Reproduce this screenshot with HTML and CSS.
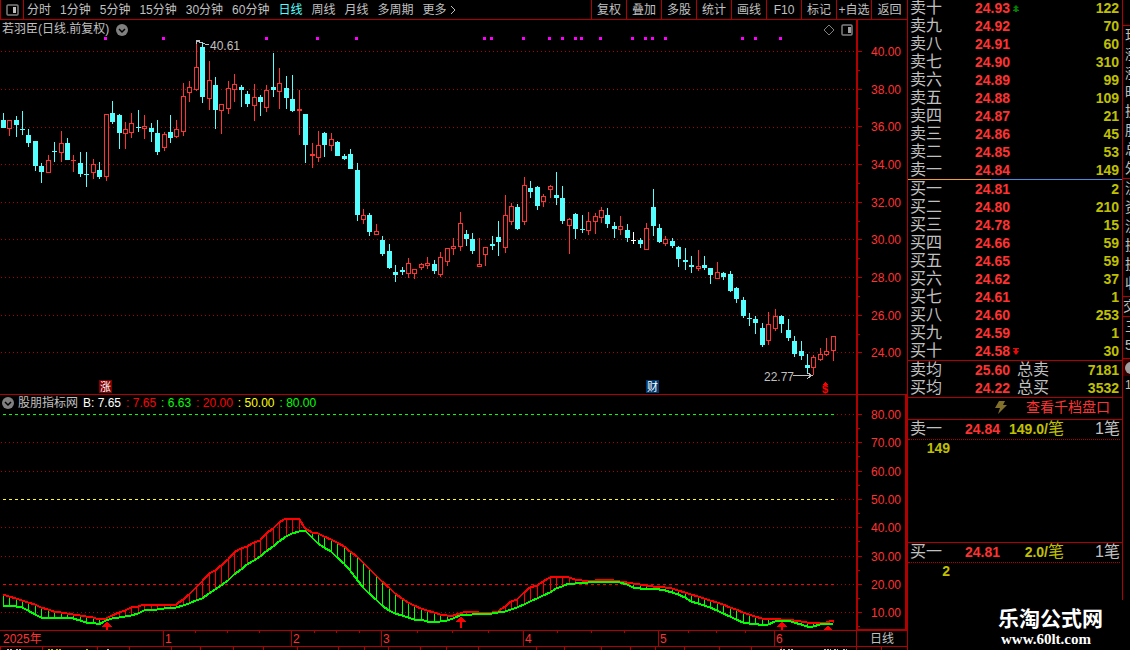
FILE: index.html
```html
<!DOCTYPE html>
<html lang="zh-CN">

<head>
    <meta charset="UTF-8">
    <meta name="viewport" content="width=device-width, initial-scale=1.0">
    <title>若羽臣 日线</title>
    <link rel="stylesheet" href="styles.css">
</head>

<body>
    <div class="terminal">
        <main class="charts">
            <div class="toolbar">
                <button class="layout-btn" aria-label="布局">
                    <svg width="13" height="12" viewBox="0 0 13 12">
                        <rect x="1" y="1" width="11" height="10" rx="1" fill="none" stroke="#808080" stroke-width="1.5" />
                        <rect x="7" y="3" width="3" height="6" fill="#c0c0c0" />
                    </svg>
                </button>
                <nav class="periods">
                    <button>分时</button>
                    <button>1分钟</button>
                    <button>5分钟</button>
                    <button>15分钟</button>
                    <button>30分钟</button>
                    <button>60分钟</button>
                    <button class="active">日线</button>
                    <button>周线</button>
                    <button>月线</button>
                    <button>多周期</button>
                    <button>更多
                        <svg width="6" height="10" viewBox="0 0 6 10"><path d="M1 1l4 4-4 4" fill="none" stroke="#c0c0c0" /></svg>
                    </button>
                </nav>
                <div class="tools">
                    <button>复权</button>
                    <button>叠加</button>
                    <button>多股</button>
                    <button>统计</button>
                    <button>画线</button>
                    <button>F10</button>
                    <button>标记</button>
                    <button>+自选</button>
                    <button>返回</button>
                </div>
            </div>

            <section class="pane price-pane">
                <div class="plot">
                    <div class="pane-title">
                        <span>若羽臣(日线.前复权)</span>
                        <svg class="chevron" width="12" height="12" viewBox="0 0 12 12">
                            <circle cx="6" cy="6" r="6" fill="#808080" />
                            <path d="M3 5l3 3 3-3" fill="none" stroke="#000" stroke-width="1.5" />
                        </svg>
                        <svg class="pane-icons" width="30" height="12" viewBox="0 0 30 12">
                            <path d="M6 1l5 5-5 5-5-5z" fill="none" stroke="#808080" />
                            <rect x="19" y="1" width="10" height="10" rx="1" fill="none" stroke="#808080" stroke-width="1.5" />
                            <rect x="25" y="3" width="3" height="6" fill="#a0a0a0" />
                        </svg>
                    </div>
                    <svg id="price" class="price-svg"></svg>
                </div>
                <svg id="price-axis" class="axis"></svg>
            </section>

            <section class="pane indicator-pane">
                <div class="plot">
                    <div class="pane-title indicator-title">
                        <svg class="chevron" width="12" height="12" viewBox="0 0 12 12">
                            <circle cx="6" cy="6" r="6" fill="#808080" />
                            <path d="M3 5l3 3 3-3" fill="none" stroke="#000" stroke-width="1.5" />
                        </svg>
                        <span>股朋指标网</span>
                        <span class="white">B: 7.65</span>
                        <span class="pure-red">: 7.65</span>
                        <span class="green">: 6.63</span>
                        <span class="pure-red">: 20.00</span>
                        <span class="yellow">: 50.00</span>
                        <span class="green">: 80.00</span>
                    </div>
                    <svg id="indicator" class="indicator-svg"></svg>
                </div>
                <svg id="indicator-axis" class="axis"></svg>
            </section>

            <div class="timeline">
                <svg id="months"></svg>
                <button class="period-label">日线</button>
            </div>
            <svg id="strip" class="strip"></svg>
        </main>

        <aside class="book">
            <table class="asks">
                <tr><th>卖十</th><td>24.93</td><td><svg class="mark" width="6" height="7" viewBox="0 0 6 7"><path d="M3 0l3 3H4v1l2 1v1H4v1H2V6H0V5l2-1V3H0z" fill="#008000" /></svg></td><td>122</td></tr>
                <tr><th>卖九</th><td>24.92</td><td></td><td>70</td></tr>
                <tr><th>卖八</th><td>24.91</td><td></td><td>60</td></tr>
                <tr><th>卖七</th><td>24.90</td><td></td><td>310</td></tr>
                <tr><th>卖六</th><td>24.89</td><td></td><td>99</td></tr>
                <tr><th>卖五</th><td>24.88</td><td></td><td>109</td></tr>
                <tr><th>卖四</th><td>24.87</td><td></td><td>21</td></tr>
                <tr><th>卖三</th><td>24.86</td><td></td><td>45</td></tr>
                <tr><th>卖二</th><td>24.85</td><td></td><td>53</td></tr>
                <tr><th>卖一</th><td>24.84</td><td></td><td>149</td></tr>
            </table>
            <div class="ratio"></div>
            <table class="bids">
                <tr><th>买一</th><td>24.81</td><td></td><td>2</td></tr>
                <tr><th>买二</th><td>24.80</td><td></td><td>210</td></tr>
                <tr><th>买三</th><td>24.78</td><td></td><td>15</td></tr>
                <tr><th>买四</th><td>24.66</td><td></td><td>59</td></tr>
                <tr><th>买五</th><td>24.65</td><td></td><td>59</td></tr>
                <tr><th>买六</th><td>24.62</td><td></td><td>37</td></tr>
                <tr><th>买七</th><td>24.61</td><td></td><td>1</td></tr>
                <tr><th>买八</th><td>24.60</td><td></td><td>253</td></tr>
                <tr><th>买九</th><td>24.59</td><td></td><td>1</td></tr>
                <tr><th>买十</th><td>24.58</td><td><svg class="mark" width="6" height="7" viewBox="0 0 6 7"><path d="M0 0h6v1H4v2h2L3 7 0 3h2V1H0z" fill="#f00" /></svg></td><td>30</td></tr>
            </table>
            <table class="averages">
                <tr><th>卖均</th><td>25.60</td><th>总卖</th><td>7181</td></tr>
                <tr><th>买均</th><td>24.22</td><th>总买</th><td>3532</td></tr>
            </table>
            <div class="depth-link">
                <svg width="12" height="13" viewBox="0 0 12 13"><path d="M4 0h6L8 4h4L3 13l2-6H0z" fill="#80702a" /></svg>
                <a href="#">查看千档盘口</a>
            </div>
            <section class="queue">
                <div class="queue-head">
                    <span class="side">卖一</span><b class="red">24.84</b><span class="per"><b>149.0/</b>笔</span><span class="count">1笔</span>
                </div>
                <b class="lot">149</b>
            </section>
            <section class="queue buy-queue">
                <div class="queue-head">
                    <span class="side">买一</span><b class="red">24.81</b><span class="per"><b>2.0/</b>笔</span><span class="count">1笔</span>
                </div>
                <b class="lot">2</b>
            </section>
            <div class="watermark">
                <strong>乐淘公式网</strong>
                <span>www.60lt.com</span>
            </div>
        </aside>

        <aside class="quote">
            <div class="quote-top"></div>
            <ul class="quote-list">
                <li>现</li>
                <li>涨</li>
                <li>涨</li>
                <li>昨</li>
                <li>换</li>
                <li>股</li>
                <li>总</li>
                <li>外</li>
            </ul>
            <ul class="quote-list flows">
                <li>流</li>
                <li>资</li>
                <li>流</li>
                <li>换</li>
                <li>换</li>
                <li>收</li>
            </ul>
            <div class="quote-cell">交</div>
            <ul class="quote-list short">
                <li>三</li>
                <li>5</li>
            </ul>
            <div class="quote-tab"><i></i></div>
            <div class="quote-one">1</div>
        </aside>
    </div>
    <script src="chart.js"></script>
</body>

</html>
```
FILE: styles.css
```css
* {
    box-sizing: border-box;
}

body {
    margin: 0;
    background: #000;
    color: #c0c0c0;
    font-family: "Liberation Sans", "Noto Sans CJK SC", sans-serif;
    font-size: 12px;
    overflow: hidden;
}

button {
    padding: 0;
    border: 0;
    background: none;
    color: inherit;
    font: inherit;
    white-space: nowrap;
    cursor: pointer;
}

svg {
    display: block;
}

.terminal {
    display: grid;
    grid-template-columns: minmax(0, 1fr) 216px 7px;
    grid-template-rows: 100vh;
    overflow: hidden;
}

/* toolbar */
.toolbar {
    display: flex;
    height: 20px;
    border-bottom: 1px solid #b00000;
    line-height: 18px;
}

.layout-btn {
    display: flex;
    align-items: center;
    justify-content: center;
    width: 24px;
    border-left: 1px solid #b00000;
    border-right: 1px solid #b00000;
}

.periods {
    display: flex;
    flex: 1;
    gap: 9px;
    padding-left: 3px;
    min-width: 0;
    overflow: hidden;
}

.periods svg {
    display: inline-block;
    vertical-align: -1px;
}

.periods .active {
    color: #54ffff;
}

.tools {
    display: flex;
}

.tools button {
    width: 35px;
    border-left: 1px solid #b00000;
}

.tools button:last-child {
    width: 36px;
}

/* chart panes */
.pane {
    display: grid;
    grid-template-columns: minmax(0, 1fr) 51px;
    border-bottom: 1px solid #b00000;
}

.plot svg {
    shape-rendering: crispEdges;
}

.pane-title {
    display: flex;
    align-items: center;
    gap: 7px;
    height: 17px;
    padding: 2px 3px 0 2px;
    line-height: 15px;
    white-space: nowrap;
}

.pane-title svg {
    shape-rendering: auto;
}

.pane-icons {
    margin-left: auto;
}

.indicator-title {
    gap: 5px;
    height: 16px;
    padding-top: 0;
}

.indicator-title .chevron {
    margin-right: -1px;
}

.price-svg {
    width: 100%;
    height: 357px;
}

.indicator-svg {
    width: 100%;
    height: 219px;
}

.axis {
    width: 51px;
    height: 100%;
    border-left: 2px solid #b00000;
    shape-rendering: crispEdges;
}

.indicator-pane .axis {
    border-right: 2px solid #b00000;
    border-bottom: 1px solid #b00000;
}

.timeline {
    display: grid;
    grid-template-columns: minmax(0, 1fr) 51px;
    height: 16px;
    border-bottom: 1px solid #b00000;
}

#months,
.strip {
    width: 100%;
    shape-rendering: crispEdges;
}

#months {
    height: 15px;
}

.strip {
    height: 3px;
}

.period-label {
    border-left: 1px solid #b00000;
    line-height: 14px;
}

.white {
    color: #fff;
}

.red {
    color: #ff3232;
}

.pure-red {
    color: #f00;
}

.green {
    color: #0f0;
}

.yellow {
    color: #ff0;
}

/* order book */
.book {
    position: relative;
    display: flex;
    flex-direction: column;
    border-left: 1px solid #b00000;
    border-right: 1px solid #b00000;
    font-size: 16px;
}

.book table {
    width: 100%;
    table-layout: fixed;
    border-collapse: collapse;
}

.book tr {
    height: 18px;
}

.book th,
.book td {
    padding: 0;
    line-height: 18px;
    white-space: nowrap;
}

.book th {
    padding-left: 2px;
    font-weight: normal;
    text-align: left;
}

.book td {
    font-size: 14px;
    font-weight: bold;
    color: #ff3232;
}

.book th:first-child {
    width: 67px;
}

.book td:nth-child(2) {
    width: 37px;
}

.book th:nth-child(3) {
    padding-left: 5px;
}

.book td:last-child {
    width: 70px;
    padding-right: 3px;
    color: #c0c000;
    text-align: right;
}

.mark {
    margin-left: 1px;
}

.asks {
    margin-top: -1px;
}

.ratio {
    height: 1px;
    background: linear-gradient(to right, #f0a030 39%, #4a8ae0 39%);
}

.averages {
    border-top: 1px solid #b00000;
    border-bottom: 1px solid #b00000;
}

.book .bids,
.book .averages {
    border-collapse: separate;
    border-spacing: 0;
}

.depth-link {
    display: flex;
    align-items: center;
    gap: 19px;
    height: 21px;
    padding: 0 0 3px 87px;
    font-size: 14px;
    line-height: 18px;
}

.depth-link a {
    color: #ff3232;
    text-decoration: none;
}

.queue {
    height: 123px;
    border-top: 1px solid #b00000;
}

.buy-queue {
    flex: 1;
    height: auto;
    min-height: 0;
}

.queue-head {
    display: grid;
    grid-template-columns: 55px 37px 62px 1fr;
    height: 20px;
    margin-right: 2px;
    padding-left: 2px;
    border-bottom: 1px dotted #b00000;
    line-height: 18px;
}

.queue b {
    font-size: 14px;
}

.per {
    color: #c0c000;
    text-align: right;
}

.count {
    text-align: right;
}

.lot {
    display: block;
    width: 42px;
    color: #c0c000;
    line-height: 17px;
    text-align: right;
}

.watermark {
    position: absolute;
    left: 0;
    right: -1px;
    bottom: 0;
    display: flex;
    flex-direction: column;
    height: 50px;
    padding: 8px 0 0 90px;
    background: #000;
    color: #fff;
}

.watermark strong {
    font-size: 21px;
    line-height: 22px;
}

.watermark span {
    padding-left: 3px;
    font: bold 15px/18px "Liberation Serif", serif;
}

/* quote panel, mostly off the right edge */
.quote {
    overflow: hidden;
}

.quote-top {
    height: 26px;
    border-bottom: 1px solid #b00000;
}

.quote-list {
    margin: 0;
    padding: 0 0 0 2px;
    list-style: none;
    font-size: 14px;
    line-height: 19px;
}

.flows {
    border-top: 1px solid #b00000;
    height: 118px;
}

.quote-cell {
    height: 21px;
    border-top: 1px solid #b00000;
    border-bottom: 1px solid #b00000;
    font-size: 14px;
    line-height: 19px;
}

.short {
    height: 41px;
}

.quote-tab {
    height: 18px;
    padding: 3px 0 0 2px;
    border-top: 1px solid #b00000;
    background: #300000;
}

.quote-tab i {
    display: block;
    width: 12px;
    height: 12px;
    border-radius: 50%;
    background: #a0a0a0;
}

.quote-one {
    padding-left: 2px;
    line-height: 18px;
}
```
FILE: chart.js
```js
var NS = "http://www.w3.org/2000/svg";
var BASE = 856;
var RED = "#ff3232";
var CYAN = "#54ffff";
var LINE = "#b00000";

// r = up, c = down, w = flat; then high, body top, body bottom, low
var candles = `c 113 120 128 128,r 120 120 129 136,c 116 120 125 137,c 111 129 130 135,c 129 135 143 147,c 141 141 166 171,c 163 166 172 183,r 155 160 173 173,c 142 151 152 162,r 131 143 153 162
c 138 143 160 160,r 155 160 161 172,c 152 163 174 177,c 152 174 175 187,r 159 164 173 179,c 162 170 177 179,r 114 114 177 181,c 101 113 122 124,c 114 115 133 149,r 122 129 134 149
r 113 123 133 138,c 110 127 128 132,r 115 126 129 139,c 123 128 132 142,c 120 133 152 155,r 132 134 148 151,c 115 132 138 143,r 120 129 137 138,r 83 96 132 136,r 81 87 93 102
r 42 67 90 91,c 42 47 97 103,r 61 80 99 110,c 77 85 110 129,r 104 104 111 134,r 81 88 109 114,r 74 84 90 102,c 85 87 90 107,c 91 94 104 107,r 84 97 106 121
c 95 97 102 116,r 85 90 108 112,c 53 87 90 97,r 68 83 92 109,c 76 88 98 109,c 75 99 111 112,r 90 109 111 135,c 114 114 145 163,r 143 154 156 168,r 131 145 158 162
c 132 133 145 157,r 133 139 146 151,c 141 142 156 156,c 154 156 159 160,c 149 154 169 169,c 163 170 215 221,r 209 215 220 224,c 213 215 232 236,r 224 231 235 235,c 236 240 254 256
c 244 251 268 269,c 265 272 275 282,c 267 270 272 275,r 258 263 274 278,r 269 269 274 279,r 263 264 268 270,r 257 263 266 269,c 260 264 271 274,r 252 257 275 277,r 248 248 262 266
r 238 246 249 255,r 212 223 247 251,c 230 234 239 246,c 233 239 251 254,r 238 264 267 267,r 247 247 255 266,c 236 244 246 250,c 221 237 242 256,r 195 215 248 253,r 203 206 222 225
c 204 207 229 230,r 177 185 222 225,c 181 188 192 198,c 186 187 206 210,r 194 196 202 207,r 185 186 190 198,c 172 195 198 205,c 186 198 221 224,r 218 219 226 254,c 213 214 229 239
c 215 229 230 233,r 212 221 231 235,r 213 216 222 234,r 207 210 218 223,c 208 215 224 228,c 222 226 229 238,r 216 226 230 235,c 224 230 238 242,w 232 240 241 244,c 238 240 244 248
r 223 228 250 250,c 189 207 226 236,c 224 228 242 243,r 236 239 244 246,c 238 241 246 248,c 246 247 259 267,c 248 260 262 270,c 256 265 267 273,r 250 266 269 271,c 256 265 268 270
c 268 268 275 284,r 262 272 279 279,c 272 273 277 280,c 271 274 291 292,c 287 288 299 303,c 297 300 316 318,c 313 318 319 326,c 316 319 323 334,c 323 328 345 347,r 312 324 341 345
r 309 316 329 331,c 315 316 324 333,c 319 330 338 341,c 336 341 354 357,c 341 351 356 360,c 354 365 368 374,r 355 357 368 375,r 348 354 360 361,r 338 351 355 356,r 336 336 351 361`.split(/[,\n]/);

var fast = [594, 596, 598, 600, 602, 604, 607, 609, 611, 612, 613, 614, 615, 616, 617, 619, 618, 615, 612, 610,
    607, 606, 604, 604, 604, 604, 604, 604, 599, 594, 587, 581, 573, 570, 565, 559, 552, 548, 546, 542,
    540, 533, 528, 522, 518, 518, 518, 528, 532, 533, 536, 539, 542, 546, 551, 556, 562, 568, 575, 581,
    587, 593, 598, 602, 605, 608, 610, 612, 614, 615, 615, 613, 611, 611, 612, 612, 612, 611, 606, 601,
    599, 592, 587, 585, 581, 577, 576, 576, 577, 579, 580, 580, 580, 579, 579, 580, 581, 582, 583, 584,
    585, 586, 586, 587, 588, 590, 592, 594, 596, 598, 600, 602, 604, 607, 609, 612, 614, 616, 618, 619,
    618, 619, 619, 620, 621, 622, 622, 622, 622, 620];

var slow = [605, 605, 606, 607, 610, 614, 617, 617, 617, 617, 617, 618, 620, 622, 622, 624, 620, 618, 617, 616,
    615, 613, 610, 609, 609, 608, 607, 607, 605, 603, 600, 598, 593, 589, 585, 580, 574, 569, 564, 560,
    556, 551, 546, 541, 536, 533, 531, 530, 537, 543, 547, 551, 557, 563, 570, 579, 587, 593, 599, 605,
    610, 613, 615, 617, 619, 619, 621, 621, 621, 620, 618, 615, 614, 614, 613, 613, 613, 612, 611, 609,
    607, 604, 601, 598, 595, 592, 588, 586, 583, 583, 582, 582, 581, 581, 581, 581, 582, 584, 587, 588,
    588, 588, 589, 590, 592, 594, 597, 601, 603, 605, 607, 610, 613, 616, 619, 622, 623, 623, 625, 624,
    621, 620, 620, 622, 624, 626, 626, 624, 623, 623];

var scale = 1;

function add(svg, name, attrs, text) {
    var el = document.createElementNS(NS, name);
    for (var key in attrs) {
        el.setAttribute(key, attrs[key]);
    }
    if (text) {
        el.textContent = text;
    }
    svg.appendChild(el);
}

function rect(svg, x, y, w, h, fill) {
    add(svg, "rect", { x: x, y: y, width: w, height: h, fill: fill });
}

function openPane(id, top) {
    var svg = document.getElementById(id);
    var style = getComputedStyle(svg);
    var w = svg.clientWidth || parseInt(style.width);
    var h = svg.clientHeight || parseInt(style.height);
    svg.innerHTML = "";
    svg.setAttribute("viewBox", "0 " + top + " " + w + " " + h);
    return svg;
}

function px(x) {
    return Math.floor(x * scale);
}

function candleX(i) {
    return px(3.2 + i * 6.434);
}

function dashed(svg, from, to, y, color, dash) {
    add(svg, "line", { x1: from, x2: to, y1: y + 0.5, y2: y + 0.5, stroke: color, "stroke-dasharray": dash });
}

function label(svg, x, y, text, color, size) {
    add(svg, "text", { x: x, y: y, fill: color, "font-size": size || 12 }, text);
}

function drawPrice() {
    var svg = openPane("price", 37);
    [51, 89, 127, 164, 202, 239, 277, 315, 352].forEach(function (y) {
        dashed(svg, 1, px(BASE), y, LINE, "1 3");
    });
    [104, 162, 265, 316, 355, 483, 490, 522, 548, 561, 574, 580, 599, 631, 644, 651, 664, 741, 754, 779].forEach(function (x) {
        rect(svg, px(x), 37, 3, 3, "#f0f");
    });
    candles.forEach(function (row, i) {
        var p = row.split(" ");
        var high = +p[1], top = +p[2], bottom = +p[3], low = +p[4];
        var x = candleX(i);
        var color = p[0] == "r" ? RED : p[0] == "c" ? CYAN : "#fff";
        rect(svg, x, high, 1, Math.max(low - high, 1), color);
        rect(svg, x - 2, top, 5, bottom - top, color);
        if (p[0] == "r" && bottom - top > 2) {
            rect(svg, x - 1, top + 1, 3, bottom - top - 2, "#000");
        }
    });

    add(svg, "path", { d: "M" + px(196) + " 44v-4h4M" + px(197) + " 41l5 2 3 1h4", fill: "none", stroke: "#c0c0c0" });
    label(svg, px(210), 50, "40.61", "#c0c0c0");
    label(svg, px(764), 381, "22.77", "#c0c0c0");
    add(svg, "path", { d: "M" + px(793) + " 375.5h19m-5-3l5 3-5 3", fill: "none", stroke: "#c0c0c0" });

    rect(svg, px(99), 380, 13, 13, "#800000");
    label(svg, px(99) + 1, 391, "涨", "#fff", 11);
    rect(svg, px(646), 380, 13, 13, "#003870");
    label(svg, px(646) + 1, 391, "财", "#fff", 11);
    add(svg, "path", { d: "M" + px(825) + " 382l3 3h-6z", fill: "#f00" });
    add(svg, "text", { x: px(822), y: 393, fill: "#f00", "font-size": 11, "font-weight": "bold" }, "$");

    var axis = openPane("price-axis", 20);
    for (var k = 0; k < 9; k++) {
        var y = Math.round(51 + k * 37.65);
        rect(axis, 0, y, 4, 1, LINE);
        if (k < 8) {
            rect(axis, 0, y + 19, 2, 1, LINE);
        }
        label(axis, 13, y + 5, (40 - k * 2) + ".00", RED);
    }
}

function polyline(svg, data, color) {
    var points = data.map(function (y, i) {
        return candleX(i) + "," + (y + 0.5);
    });
    add(svg, "polyline", { points: points.join(" "), fill: "none", stroke: color, "stroke-width": 2 });
}

function isRising(i) {
    return (i >= 16 && i <= 47) || (i >= 70 && i <= 95) || i == 129;
}

function drawIndicator() {
    var svg = openPane("indicator", 411);
    [442, 471, 527, 556, 612].forEach(function (y) {
        dashed(svg, 1, px(BASE), y, LINE, "1 3");
    });
    dashed(svg, 3, px(834), 414, "#0f0", "3 3");
    dashed(svg, 3, px(834), 499, "#ff0", "3 3");
    dashed(svg, 3, px(834), 584, "#f00", "3 3");
    [414, 499, 584].forEach(function (y) {
        dashed(svg, px(837), px(BASE), y, LINE, "1 3");
    });

    fast.forEach(function (y, i) {
        rect(svg, candleX(i), y, 1, slow[i] - y, isRising(i) ? "#f00" : "#0f0");
    });
    polyline(svg, fast, "#f00");
    polyline(svg, slow, "#0f0");

    [[106, 621], [460, 616], [781, 621], [827, 625]].forEach(function (a) {
        var x = px(a[0]) + 1;
        add(svg, "path", { d: "M" + x + " " + a[1] + "l5 6h-4v6h-2v-6h-4z", fill: "#f00" });
    });

    var axis = openPane("indicator-axis", 395);
    for (var k = 0; k < 8; k++) {
        var y = Math.round(414 + k * 28.3);
        rect(axis, 0, y, 4, 1, LINE);
        rect(axis, 0, y + 14, 2, 1, LINE);
        label(axis, 13, y + 5, (80 - k * 10) + ".00", RED);
    }
}

function drawTimeline() {
    var svg = openPane("months", 631);
    label(svg, 3, 643, "2025年", RED);
    [163, 291, 381, 523, 658, 774].forEach(function (x, i) {
        rect(svg, px(x), 631, 1, 15, LINE);
        label(svg, px(x) + 2, 643, String(i + 1), RED);
    });
    [195, 227, 259, 314, 336, 359, 417, 452, 488, 557, 591, 624, 688, 716, 745].forEach(function (x) {
        rect(svg, px(x), 631, 1, 2, LINE);
    });

    var strip = openPane("strip", 647);
    [0, 42, 97, 129, 171, 200, 233, 263, 297, 338, 364, 388, 420, 446, 478, 536, 564, 601, 630, 655, 684, 719, 751, 781, 856, 881].forEach(function (x) {
        rect(strip, px(x), 647, 1, 3, LINE);
    });
    // tops of the next text line
    [[7, 6, "#c0c0c0"], [16, 6, "#c0c0c0"], [48, 5, "#c0c000"], [56, 6, "#c0c000"], [86, 2, "#c0c000"], [107, 2, "#c0c0c0"], [780, 6, "#c0c0c0"], [788, 5, "#c0c0c0"], [824, 7, "#c0c0c0"], [834, 4, "#c0c0c0"], [843, 4, "#c0c0c0"]].forEach(function (t) {
        dashed(strip, px(t[0]), px(t[0]) + t[1], 649, t[2], "2 1");
    });
}

function draw() {
    scale = document.getElementById("price").clientWidth / BASE;
    drawPrice();
    drawIndicator();
    drawTimeline();
}

draw();
window.addEventListener("resize", draw);
```
